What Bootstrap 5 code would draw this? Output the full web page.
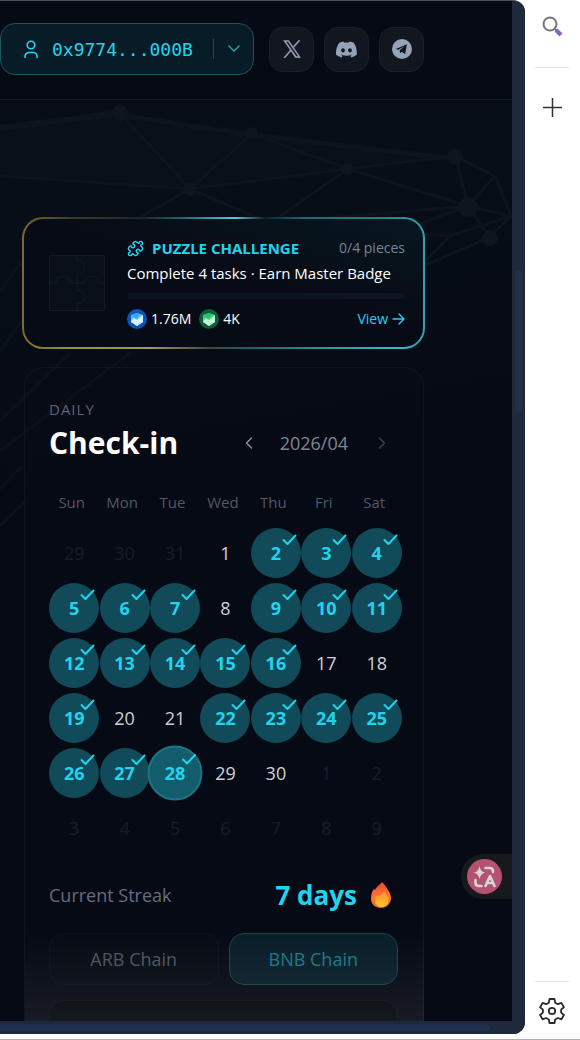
<!DOCTYPE html>
<html lang="en">
<head>
<meta charset="utf-8">
<meta name="viewport" content="width=device-width, initial-scale=1">
<title>Daily Check-in</title>
<link href="https://cdn.jsdelivr.net/npm/bootstrap@5.3.0/dist/css/bootstrap.min.css" rel="stylesheet">
<style>
:root { --cyan: #22d3ee; --ink: #060a14; --rail: #1e293b; }
body { font-family: "Open Sans", "Noto Sans", sans-serif; font-size: 15px; line-height: 24px; color: #fff; background: #fff; }
svg { display: block; flex: none; }
.shell { height: 100vh; overflow: hidden; }
.frame { background: var(--rail); border-top: 1px solid #4b505a; border-radius: 0 12px 12px 0; margin-bottom: 6px; overflow: hidden; }
.side { width: 55px; color: #333; padding-right: 1px; }
.footline { border-bottom: 1px solid #aab0b4; left: 0; right: 0; bottom: 0; }
.site { background: linear-gradient(170deg, #080d16 0, #060e17 20%, var(--ink) 45%); overflow: hidden; }
.track { width: 13px; background: var(--rail); padding: 269px 3px 0; }
.thumb-v { height: 142px; background: #243047; border-radius: 4px; }
.track-h { height: 13px; background: var(--rail); padding: 3px 35px 3px 0; }
.thumb-h { background: #223050; border-radius: 0 4px 4px 0; }
.topbar { height: 99px; border-bottom: 1px solid #141a24; background: var(--ink); padding-right: 88px; padding-bottom: 2px; gap: 15px; }
.wallet { height: 52px; border: 1px solid #1b5560; border-radius: 15px; background: #081c28; color: var(--cyan); font-family: "DejaVu Sans Mono", monospace; font-size: 18px; padding: 0 13px 0 21px; }
.wallet:hover { background: #081c28; color: var(--cyan); border-color: #1b5560; }
.wallet .split { width: 1px; height: 20px; background: #1b4a55; margin-right: 14px; }
.social { width: 45px; height: 45px; border: 1px solid #1a1f28; border-radius: 14px; background: #12161f; color: #94a3b8; }
.social-list { gap: 10px; }
.mesh { left: 0; top: 100px; width: 512px; height: 460px; }
.column { padding: 117px 87px 0 22px; }
.puzzle { border: 2px solid transparent; border-radius: 21px; padding: 16px; padding-left: 25px; padding-right: 18px; gap: 22px;
  background:
    linear-gradient(15deg, #070b16 55%, #07111a 75%, #07171f 100%) padding-box,
    linear-gradient(90deg, #7d6a2d 0, #3f3a28 12%, #1b2529 30%, #217687 42%, #5ac8dd 53%, #10202a 60%, #1d6873 70%, #237f8a 90%, #2fa3ae 100%) top / 100% 50% no-repeat border-box,
    linear-gradient(90deg, #7d6a2d 0, #a08a3c 12%, #a8935a 32%, #40463c 47%, #1c5f6b 56%, #2f93a0 75%, #3fb4c4 92%, #2fa3ae 100%) bottom / 100% 51% no-repeat border-box; }
.puzzle .cap { color: var(--cyan); font-size: 15px; line-height: 26px; }
.puzzle .soft { color: #7a8494; font-size: 14px; }
.puzzle .goal { font-size: 15px; line-height: 24px; }
.bar { height: 6px; border-radius: 3px; background: #0d1521; margin-top: 8px; }
.stats { font-size: 14px; line-height: 24px; margin-top: 8px; }
.stats a { color: var(--cyan); }
.checkin { border: 1px solid #10161f; border-radius: 20px; margin: 18px 1px 0 2px; padding: 29px 21px 24px 24px; }
.eyebrow { font-size: 15px; letter-spacing: 1px; color: #5b6472; }
.heading { font-size: 30px; line-height: 44px; }
.month { color: #7d8694; font-size: 18px; padding: 0 22px 0 18px; }
.pager { color: #8b94a3; }
.pager:disabled { color: #3b424e; border: 0; opacity: 1; }
.calendar { table-layout: fixed; margin-top: 25px; }
.calendar th { font-weight: 400; color: #4f5866; padding: 0 5px 11px 0; height: 35px; }
.calendar td { padding: 0; height: 55px; font-size: 18px; color: #cdd1d8; }
.calendar .out { color: #181e29; }
.day { width: 50px; height: 50px; left: 50%; top: 50%; transform: translate(-50%, -50%); border-radius: 50%; background: #114b59; color: var(--cyan); font-weight: 700; }
.day svg { right: 4px; top: 6px; }
.today { width: 55px; height: 55px; border: 2px solid #1c7584; background: #135c6c; z-index: 1; }
.streak { color: #646e7d; font-size: 18px; margin: 20px 11px 0 0; height: 40px; }
.streak strong { color: var(--cyan); font-size: 26px; margin-right: 14px; }
.chain, .chain:hover { height: 52px; border: 1px solid #0c121c; border-radius: 15px; color: #4c535e; font-size: 18px; background: #060b14; }
.chain.picked { border-color: #17434d; background: #091e29; color: #1b7783; }
.chains { gap: 10px; margin-top: 18px; }
.claim { height: 60px; border: 1px solid #0d1118; border-radius: 15px; background: #04070d; margin-top: 15px; }
.fade-out { left: 25px; right: 88px; bottom: 0; height: 90px; background: linear-gradient(transparent, #ffffff12); pointer-events: none; }
.translate { right: 0; top: 853px; width: 51px; height: 45px; border-radius: 22px 0 0 22px; background: #161a1d; padding: 0 0 0 6px; }
.side hr { width: 34px; border-color: #999; }
.side .gap-top { margin-top: 30px; }
</style>
</head>
<body>
<div class="shell d-flex position-relative">
  <div class="frame d-flex flex-column flex-grow-1">
    <div class="d-flex flex-grow-1 overflow-hidden">
      <div class="site position-relative flex-grow-1">
        <svg class="mesh position-absolute" viewBox="0 0 512 460" fill="none" stroke="#0e141d" stroke-width="3" stroke-linejoin="round" aria-hidden="true">
          <path d="M0 27 120 12 252 33 455 55 348 68 190 88 0 75Z" fill="#0b131c" stroke="none" opacity=".6"/>
          <path d="M0 27 120 12" stroke-width="6"/><path d="M120 14 252 34 455 58" stroke-width="5"/>
          <path d="M0 75 190 88 348 68 455 55 495 75 511 115 488 137 400 175M120 12 190 88M252 33 190 88M190 88 270 122 348 68 468 105 511 115M455 55 468 105 490 137M190 88 130 122M270 122 468 105M270 122 450 135 511 115M468 105 400 130M468 105 495 75M252 33 348 68M450 135 420 165"/>
          <g fill="#0f151e" stroke="none"><circle cx="120" cy="12" r="8"/><circle cx="252" cy="32" r="6"/><circle cx="455" cy="56" r="8"/><circle cx="468" cy="106" r="10"/><circle cx="190" cy="88" r="7"/><circle cx="348" cy="68" r="6"/><circle cx="490" cy="137" r="8"/></g>
          <path d="M0 190 22 160M0 250 22 220M0 320 70 252M0 350 130 252M0 388 22 365M0 425 26 400" opacity=".7"/>
        </svg>

        <header class="topbar d-flex align-items-center position-relative">
          <button type="button" class="btn wallet d-flex align-items-center flex-grow-1">
            <svg width="18" height="20" viewBox="0 0 18 20" fill="none" stroke="currentColor" stroke-width="1.6" stroke-linecap="round"><circle cx="9" cy="6" r="3.8"/><path d="M3 18.500v-1a4 4 0 0 1 4-4h4a4 4 0 0 1 4 4v1"/></svg>
            <span class="ms-2 me-auto ps-1">0x9774...000B</span>
            <span class="split"></span>
            <svg width="12" height="8" viewBox="0 0 12 8" fill="none" stroke="#2da5b8" stroke-width="1.4" stroke-linecap="round" stroke-linejoin="round"><path d="m1 1 5 5 5-5"/></svg>
          </button>
          <div class="social-list d-flex">
            <a href="#" class="social d-flex align-items-center justify-content-center" aria-label="X"><svg width="18" height="18" viewBox="0 0 24 24" fill="currentColor" stroke="currentColor" stroke-width=".7"><path d="M14.300 10.200 22.700 0.500h-2L13.400 8.900 7.600.5H.9l8.800 12.800L.9 23.500h2l7.700-8.900 6.100 8.900h6.700zM3.600 2h3.100l14.100 20.100h-3.100z"/></svg></a>
            <a href="#" class="social d-flex align-items-center justify-content-center" aria-label="Discord"><svg width="21" height="21" viewBox="0 0 24 24" fill="currentColor"><path d="M20.317 4.370a19.800 19.800 0 0 0-4.885-1.515.07.07 0 0 0-.079.037c-.21.375-.444.864-.608 1.250a18.300 18.300 0 0 0-5.487 0 12.600 12.600 0 0 0-.617-1.250.08.08 0 0 0-.079-.037A19.700 19.700 0 0 0 3.677 4.370C.533 9.046-.32 13.580.099 18.058a.08.08 0 0 0 .031.057 19.900 19.900 0 0 0 5.993 3.030.08.08 0 0 0 .084-.028c.462-.63.874-1.295 1.226-1.994a.076.076 0 0 0-.041-.106 13.100 13.100 0 0 1-1.872-.892l.368-.408c3.928 1.793 8.180 1.793 12.062 0l.375.408c-.598.35-1.219.645-1.873.892a.077.077 0 0 0-.041.107c.36.698.772 1.362 1.225 1.993a.076.076 0 0 0 .084.028 19.800 19.800 0 0 0 6.002-3.030c.532-5.177-.838-9.674-3.405-13.745zM8.020 15.331c-1.183 0-2.157-1.086-2.157-2.419s.956-2.419 2.157-2.419c1.210 0 2.176 1.095 2.157 2.419 0 1.333-.956 2.419-2.157 2.419zm7.975 0c-1.183 0-2.157-1.086-2.157-2.419s.955-2.419 2.157-2.419c1.210 0 2.176 1.095 2.157 2.419 0 1.333-.946 2.419-2.157 2.419z"/></svg></a>
            <a href="#" class="social d-flex align-items-center justify-content-center" aria-label="Telegram"><svg width="20" height="20" viewBox="0 0 24 24"><circle cx="12" cy="12" r="12" fill="currentColor"/><path d="M4.500 12 18 6.300l-2.300 11.900-4-3-2 2-.5-3.800 6-4.900-7.600 4.400z" fill="#12161f"/></svg></a>
          </div>
        </header>

        <main class="column position-relative">
          <section class="puzzle d-flex align-items-center">
            <svg width="56" height="56" viewBox="0 0 56 56" fill="#09101a" stroke="#131b26"><path d="M.5.5h55v55H.5z"/><path fill="none" d="M28 .5v5c10-2 10 16 0 13v17c10-2 10 16 0 13v7M.5 28h7c-1-9 14-9 13 0h15c-1-9 14-9 13 0h7"/></svg>
            <div class="flex-grow-1">
              <div class="d-flex align-items-center">
                <svg class="me-2" width="17" height="17" viewBox="0 0 24 24" fill="none" stroke="#22d3ee" stroke-width="2" stroke-linecap="round" stroke-linejoin="round"><path d="M15.390 4.390a1 1 0 0 0 1.680-.474 2.500 2.500 0 1 1 3.014 3.015 1 1 0 0 0-.474 1.680l1.683 1.682a2.414 2.414 0 0 1 0 3.414L19.610 15.390a1 1 0 0 1-1.680-.474 2.500 2.500 0 1 0-3.014 3.015 1 1 0 0 1 .474 1.680l-1.683 1.682a2.414 2.414 0 0 1-3.414 0L8.610 19.610a1 1 0 0 0-1.680.474 2.500 2.500 0 1 1-3.014-3.015 1 1 0 0 0 .474-1.680l-1.683-1.682a2.414 2.414 0 0 1 0-3.414L4.390 8.610a1 1 0 0 1 1.680.474 2.500 2.500 0 1 0 3.014-3.015 1 1 0 0 1-.474-1.680l1.683-1.682a2.414 2.414 0 0 1 3.414 0z"/></svg>
                <strong class="cap">PUZZLE CHALLENGE</strong>
                <span class="soft ms-auto">0/4 pieces</span>
              </div>
              <div class="goal text-nowrap">Complete 4 tasks · Earn Master Badge</div>
              <div class="bar"></div>
              <div class="stats d-flex align-items-center">
                <svg width="20" height="20" viewBox="0 0 20 20"><circle cx="10" cy="10" r="10" fill="#0b55b5"/><path d="m10 4 6 2v7l-6 4-6-4V6z" fill="#5fc3fa"/><path d="M4 6l6-2 3 2-4 4z" fill="#36a9f6"/><path d="m16 6-6 5-3-2-3 3v1l6 4 6-4z" fill="#d8f3ff"/></svg>
                <span class="ms-1">1.76M</span>
                <svg class="ms-2" width="20" height="20" viewBox="0 0 20 20"><circle cx="10" cy="10" r="10" fill="#0f5b3c"/><path d="m10 4 6 2v7l-6 4-6-4V6z" fill="#3fd67d"/><path d="M4 6l6-2 3 2-4 4z" fill="#1cc46a"/><path d="m16 6-6 5-3-2-3 3v1l6 4 6-4z" fill="#c0f8d4"/></svg>
                <span class="ms-1">4K</span>
                <a href="#" class="ms-auto text-decoration-none d-flex align-items-center">View<svg class="ms-1" width="13" height="12" viewBox="0 0 13 12" fill="none" stroke="currentColor" stroke-width="1.3" stroke-linecap="round" stroke-linejoin="round"><path d="M1 6h11M7 1l5 5-5 5"/></svg></a>
              </div>
            </div>
          </section>

          <section class="checkin">
            <div class="eyebrow">DAILY</div>
            <div class="d-flex align-items-center">
              <h1 class="heading fw-bold mb-0 me-auto">Check-in</h1>
              <button type="button" class="btn pager p-2" aria-label="Previous month"><svg width="8" height="12" viewBox="0 0 8 12" fill="none" stroke="currentColor" stroke-width="1.4" stroke-linecap="round" stroke-linejoin="round"><path d="M6.500 1 1.500 6l5 5"/></svg></button>
              <span class="month">2026/04</span>
              <button type="button" class="btn pager p-2 me-2" disabled aria-label="Next month"><svg width="8" height="12" viewBox="0 0 8 12" fill="none" stroke="currentColor" stroke-width="1.4" stroke-linecap="round" stroke-linejoin="round"><path d="m1.500 1 5 5-5 5"/></svg></button>
            </div>
            <table class="calendar w-100 text-center">
              <thead><tr><th>Sun</th><th>Mon</th><th>Tue</th><th>Wed</th><th>Thu</th><th>Fri</th><th>Sat</th></tr></thead>
              <tbody id="days"></tbody>
            </table>
            <div class="streak d-flex align-items-center">
              <span class="me-auto">Current Streak</span><strong>7 days</strong>
              <svg width="20" height="26" viewBox="0 0 20 26"><defs><linearGradient id="fl" x1="0" y1="0" x2="0" y2="1"><stop stop-color="#ef4438"/><stop offset=".6" stop-color="#ff7a2c"/><stop offset="1" stop-color="#e85d3d"/></linearGradient><linearGradient id="fi" x1="0" y1="0" x2="0" y2="1"><stop stop-color="#ff8a35"/><stop offset="1" stop-color="#ffc928"/></linearGradient></defs><path d="M11 0c4 4 8 10 9 15 .5 6-4 11-10 11S0 22 0 17c0-4 1-8 3-10l1 1C5 5 9 3 11 0z" fill="url(#fl)"/><path d="M13 9c3 3 5 6 4.500 10s-3.500 6-7 6S4 22.500 4 19c0-3 1-5 3-6l1 1c2-1 4-3 5-5z" fill="url(#fi)"/></svg>
            </div>
            <div class="chains d-flex me-1">
              <button type="button" class="btn chain flex-fill w-50">ARB Chain</button>
              <button type="button" class="btn chain picked flex-fill w-50">BNB Chain</button>
            </div>
            <div class="claim me-1"></div>
          </section>
        </main>
        <div class="fade-out position-absolute"></div>
        <button type="button" class="translate btn border-0 position-absolute d-flex align-items-center" aria-label="Translate">
          <svg width="35" height="35" viewBox="0 0 35 35"><circle cx="17.500" cy="17.500" r="17.500" fill="#b65271"/><path d="M12.500 7q1 6 6 6.500-5 1-6 6.500-1-5.500-6-6.500 5-.5 6-6.500z" fill="#d8d5da"/><g fill="none" stroke="#d8d5da" stroke-width="2.600" stroke-linecap="round" stroke-linejoin="round"><path d="M18.500 9h4.500q3 0 3 4M8.500 21v3q0 3 4 3h2M18.500 27l4.500-10 4.500 10M20.500 24h5"/></g></svg>
        </button>
      </div>
      <div class="track flex-shrink-0"><div class="thumb-v"></div></div>
    </div>
    <div class="track-h d-flex flex-shrink-0"><div class="thumb-h flex-grow-1"></div></div>
  </div>

  <aside class="side d-flex flex-column align-items-center flex-shrink-0">
    <button type="button" class="btn p-0 border-0 mt-3" aria-label="Search"><svg width="21" height="21" viewBox="0 0 21 21" fill="none"><circle cx="8" cy="8" r="6.500" stroke="#777" stroke-width="2"/><path d="m12.500 12.500 2 2" stroke="#777" stroke-width="2"/><path d="m14 14 5 5" stroke="#8561c5" stroke-width="4"/></svg></button>
    <hr class="gap-top mb-0">
    <button type="button" class="btn p-0 border-0 gap-top" aria-label="Add"><svg width="19" height="19" viewBox="0 0 19 19" stroke="#333" stroke-width="1.500"><path d="M9.500 0v19M0 9.500h19"/></svg></button>
    <hr class="mt-auto mb-3">
    <button type="button" class="btn p-0 border-0 mb-3" aria-label="Settings"><svg width="26" height="26" viewBox="0 0 26 26" fill="none" stroke="#2b2b2b" stroke-width="1.800" stroke-linejoin="round"><circle cx="13" cy="13" r="3.200"/><path d="M10.500 1h5l.7 3.700 2.700 1.500 3.500-1.300 2.500 4.300-2.800 2.400v3l2.800 2.400-2.500 4.300-3.500-1.300-2.700 1.500-.7 3.500h-5l-.7-3.500-2.700-1.500-3.500 1.300L1.100 17l2.800-2.400v-3L1.100 9.200l2.500-4.300 3.500 1.300 2.700-1.500z"/></svg></button>
  </aside>
  <div class="footline position-absolute"></div>
</div>
<script>
const checked = [2,3,4,5,6,7,9,10,11,12,13,14,15,16,19,22,23,24,25,26,27,28];
const tick = '<svg class="position-absolute" width="15" height="12" viewBox="0 0 15 12" fill="none" stroke="#22d3ee" stroke-width="2" stroke-linecap="round" stroke-linejoin="round"><path d="m1.500 6 4 4 8-8.500"/></svg>';
let rows = '';
for (let w = 0; w < 6; w++) {
  rows += '<tr>';
  for (let d = 0; d < 7; d++) {
    const n = w * 7 + d - 2;
    if (n < 1) rows += `<td class="out">${31 + n}</td>`;
    else if (n > 30) rows += `<td class="out">${n - 30}</td>`;
    else if (checked.includes(n)) rows += `<td class="position-relative"><span class="day position-absolute d-flex align-items-center justify-content-center ${n === 28 ? 'today' : ''}">${n}${tick}</span></td>`;
    else rows += `<td>${n}</td>`;
  }
  rows += '</tr>';
}
document.getElementById('days').innerHTML = rows;
</script>
<script src="https://cdn.jsdelivr.net/npm/bootstrap@5.3.0/dist/js/bootstrap.bundle.min.js"></script>
</body>
</html>
